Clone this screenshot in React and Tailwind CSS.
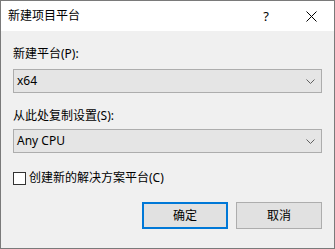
const font = { fontFamily: '"Noto Sans", "Noto Sans CJK SC", sans-serif' };

function Chevron() {
  return (
    <svg width="9" height="5" viewBox="0 0 9 5" className="shrink-0">
      <polyline points="0.5,0.5 4.5,4.5 8.5,0.5" fill="none" stroke="#606060" strokeWidth="1" />
    </svg>
  );
}

function Select({ value }) {
  return (
    <div className="mt-[7px] flex h-[24px] items-center justify-between border border-[#adadad] bg-[#e5e5e5] pl-[3px] pr-[6px] text-[12px] text-black">
      <span>{value}</span>
      <Chevron />
    </div>
  );
}

export default function App() {
  return (
    <div
      className="flex h-[249px] w-[335px] flex-col border border-[#7a7a7a] bg-[#f0f0f0] text-[12px] leading-[16px] text-black"
      style={font}
    >
      {/* Title bar */}
      <div className="flex h-[30px] items-center bg-white pl-[7px]">
        <span>新建项目平台</span>
        <span className="ml-auto mr-[37px] text-[13px]">?</span>
        <svg width="11" height="11" viewBox="0 0 11 11" className="mr-[17px]">
          <path d="M0.5 0.5 L10.5 10.5 M10.5 0.5 L0.5 10.5" stroke="#000" strokeWidth="1" />
        </svg>
      </div>

      {/* Body */}
      <div className="flex flex-col px-[12px] pr-[12px] pt-[15px]">
        <div>新建平台(P):</div>
        <Select value="x64" />

        <div className="mt-[15px]">从此处复制设置(S):</div>
        <div className="mt-[5px] flex h-[24px] items-center justify-between border border-[#adadad] bg-[#e5e5e5] pl-[3px] pr-[6px]">
          <span>Any CPU</span>
          <Chevron />
        </div>

        <label className="mt-[17px] flex items-center gap-[3px]">
          <span className="h-[13px] w-[13px] border border-[#333] bg-white" />
          <span>创建新的解决方案平台(C)</span>
        </label>

        <div className="mt-[16px] flex justify-end gap-[8px]">
          <button className="h-[27px] w-[86px] border-2 border-[#0078d7] bg-[#e1e1e1]">确定</button>
          <button className="h-[27px] w-[86px] border border-[#adadad] bg-[#e1e1e1]">取消</button>
        </div>
      </div>
    </div>
  );
}
